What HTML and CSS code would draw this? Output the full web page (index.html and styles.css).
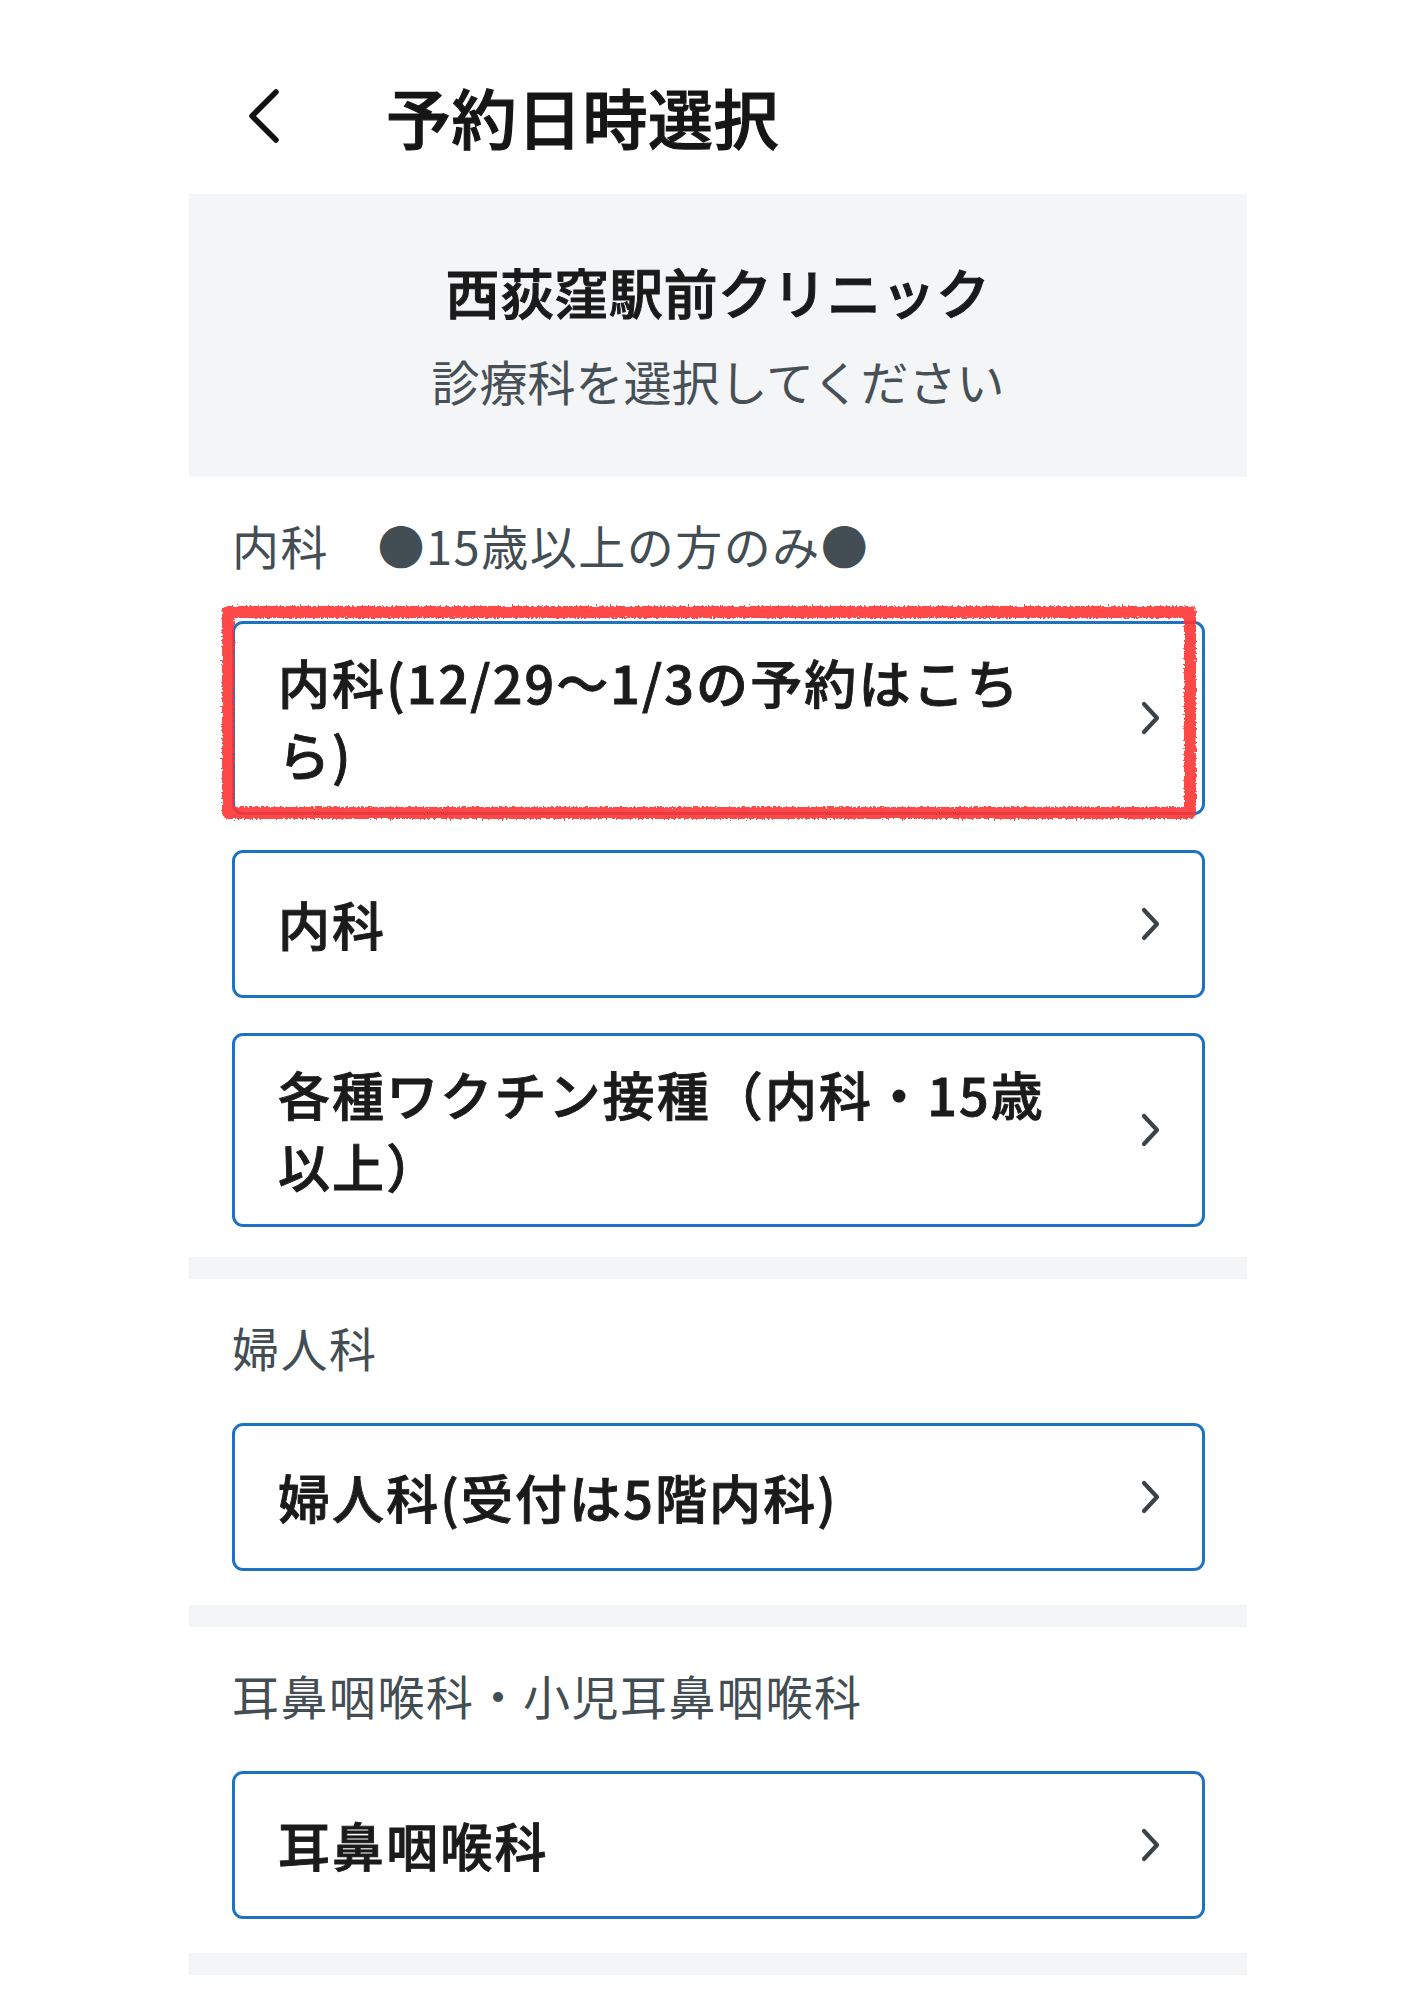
FILE: index.html
```html
<!DOCTYPE html>
<html lang="ja">
<head>
<meta charset="utf-8">
<title>予約日時選択</title>
<link rel="stylesheet" href="styles.css">
</head>
<body>
<svg class="defs" aria-hidden="true" width="0" height="0">
  <defs>
    <filter id="rough" x="-5%" y="-10%" width="110%" height="120%">
      <feTurbulence type="fractalNoise" baseFrequency="0.5" numOctaves="2" seed="3" result="n"/>
      <feDisplacementMap in="SourceGraphic" in2="n" scale="6" xChannelSelector="R" yChannelSelector="G"/>
    </filter>
  </defs>
</svg>
<div class="page">
  <header class="topbar">
    <a class="back" href="#" aria-label="戻る">
      <svg width="36" height="54" viewBox="0 0 36 54"><path d="M30 3 L6 27 L30 51" /></svg>
    </a>
    <h1 class="title">予約日時選択</h1>
  </header>

  <section class="clinic">
    <div class="clinic-name">西荻窪駅前クリニック</div>
    <div class="clinic-sub">診療科を選択してください</div>
  </section>

  <section class="dept dept-first">
    <h2 class="dept-label">内科　●15歳以上の方のみ●</h2>
    <ul class="menu">
      <li class="menu-row">
        <a class="item" href="#">
          <span class="item-text">内科(12/29〜1/3の予約はこちら)</span>
          <svg class="chev" width="22" height="34" viewBox="0 0 22 34"><path d="M4 3 L17 17 L4 31"/></svg>
        </a>
        <span class="mark" aria-hidden="true"></span>
      </li>
      <li class="menu-row">
        <a class="item" href="#">
          <span class="item-text">内科</span>
          <svg class="chev" width="22" height="34" viewBox="0 0 22 34"><path d="M4 3 L17 17 L4 31"/></svg>
        </a>
      </li>
      <li class="menu-row">
        <a class="item" href="#">
          <span class="item-text">各種ワクチン接種（内科・15歳以上）</span>
          <svg class="chev" width="22" height="34" viewBox="0 0 22 34"><path d="M4 3 L17 17 L4 31"/></svg>
        </a>
      </li>
    </ul>
  </section>
  <div class="divider"></div>

  <section class="dept">
    <h2 class="dept-label">婦人科</h2>
    <ul class="menu">
      <li class="menu-row">
        <a class="item" href="#">
          <span class="item-text">婦人科(受付は5階内科)</span>
          <svg class="chev" width="22" height="34" viewBox="0 0 22 34"><path d="M4 3 L17 17 L4 31"/></svg>
        </a>
      </li>
    </ul>
  </section>
  <div class="divider"></div>

  <section class="dept">
    <h2 class="dept-label">耳鼻咽喉科・小児耳鼻咽喉科</h2>
    <ul class="menu">
      <li class="menu-row">
        <a class="item" href="#">
          <span class="item-text">耳鼻咽喉科</span>
          <svg class="chev" width="22" height="34" viewBox="0 0 22 34"><path d="M4 3 L17 17 L4 31"/></svg>
        </a>
      </li>
    </ul>
  </section>
  <div class="divider"></div>
</div>
</body>
</html>
```

FILE: styles.css
```css
* { box-sizing: border-box; }

html, body {
  margin: 0;
  padding: 0;
  background: #ffffff;
}

body {
  font-family: "Noto Sans CJK JP", "Noto Sans", sans-serif;
  color: #1b1b1b;
}

.defs {
  position: absolute;
  width: 0;
  height: 0;
  overflow: hidden;
}

.page {
  width: 1058px;
  margin-left: 189px;
}

/* header */
.topbar {
  height: 194px;
  display: flex;
  align-items: flex-start;
  padding-top: 78px;
  padding-left: 57px;
}

.back {
  display: flex;
  align-items: center;
  height: 76px;
  width: 140px;
  flex: none;
}

.back svg path {
  fill: none;
  stroke: #111;
  stroke-width: 5.5;
  stroke-linecap: round;
  stroke-linejoin: round;
}

.title {
  margin: 0;
  font-size: 65px;
  line-height: 76px;
  font-weight: 500;
  -webkit-text-stroke: 1.2px #161616;
  letter-spacing: 0.5px;
  color: #161616;
}

/* clinic box */
.clinic {
  background: #f4f5f7;
  height: 283px;
  padding-top: 62px;
  text-align: center;
}

.clinic-name {
  font-size: 54px;
  line-height: 72px;
  font-weight: 500;
  -webkit-text-stroke: 1px #1a1a1a;
  letter-spacing: 0.5px;
  color: #1a1a1a;
}

.clinic-sub {
  margin-top: 20px;
  font-size: 48px;
  line-height: 64px;
  font-weight: 400;
  color: #465056;
}

/* department sections */
.dept {
  padding: 38px 42px 34px 43px;
}

.dept-first {
  padding-bottom: 30px;
}

.dept-label {
  margin: 0 0 46px;
  font-size: 47px;
  line-height: 60px;
  font-weight: 400;
  letter-spacing: 1.5px;
  color: #434d54;
}

.menu {
  list-style: none;
  margin: 0;
  padding: 0;
  display: flex;
  flex-direction: column;
  gap: 35px;
}

.menu-row {
  position: relative;
}

.item {
  display: flex;
  align-items: center;
  min-height: 148px;
  padding: 22px 40px 22px 43px;
  border: 3px solid #1d72c2;
  border-radius: 11px;
  text-decoration: none;
  color: #1b1b1b;
  background: #fff;
}

.item-text {
  flex: 1;
  max-width: 784px;
  margin-right: auto;
  font-size: 52px;
  line-height: 72px;
  font-weight: 500;
  -webkit-text-stroke: 0.9px #1b1b1b;
  letter-spacing: 2.1px;
}

.chev {
  flex: none;
  margin-left: auto;
}

.chev path {
  fill: none;
  stroke: #3b4348;
  stroke-width: 4.2;
  stroke-linecap: round;
  stroke-linejoin: round;
}

/* hand-drawn red annotation */
.mark {
  position: absolute;
  left: -10px;
  top: -15px;
  width: 974px;
  height: 213px;
  border: 12px solid rgba(255, 52, 52, 0.9);
  border-radius: 6px;
  filter: url(#rough);
  pointer-events: none;
}

.divider {
  height: 22px;
  background: #f4f5f7;
}
```
